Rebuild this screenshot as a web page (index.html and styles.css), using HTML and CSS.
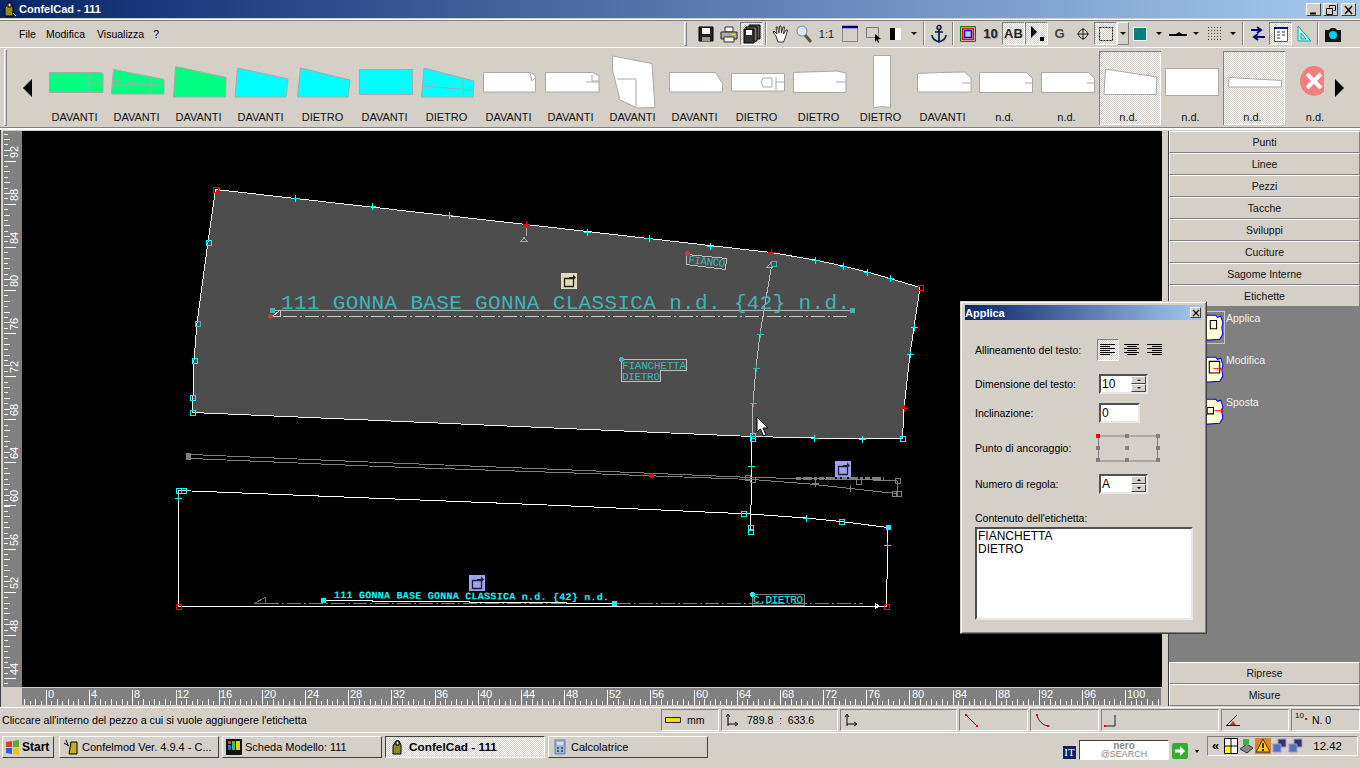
FILE: index.html
```html
<!DOCTYPE html>
<html lang="it">
<head>
<meta charset="utf-8">
<title>ConfelCad - 111</title>
<link rel="stylesheet" href="styles.css">
</head>
<body>
<div class="app">
  <header class="titlebar">
    <svg class="title-icon" width="16" height="16" viewBox="0 0 16 16"><path d="M3 15V7l3-5h3l2 4v9z" fill="#8a8a20" stroke="#000"/><path d="M6 2h3v4H6z" fill="#ddd" stroke="#000"/><path d="M11 12l3 3" stroke="#fff"/></svg>
    <span class="title-text">ConfelCad - 111</span>
    <div class="win-btns">
      <button class="win-btn"><svg width="12" height="10" viewBox="0 0 12 10"><path d="M2 8.500h6" stroke="#000" stroke-width="2"/></svg></button>
      <button class="win-btn"><svg width="12" height="10" viewBox="0 0 12 10"><path d="M4.500 2.500V.5h6v5h-2M1.500 3.500h6v6h-6z" fill="none" stroke="#000"/></svg></button>
      <button class="win-btn close"><svg width="12" height="10" viewBox="0 0 12 10"><path d="M2 1l7 8M9 1l-7 8" stroke="#000" stroke-width="1.500"/></svg></button>
    </div>
  </header>

  <div class="menubar">
    <nav class="menu"><span>File</span><span>Modifica</span><span>Visualizza</span><span>?</span></nav>
    <div class="toolbar">
      <i class="grip"></i>
      <button class="tb"><svg viewBox="0 0 20 20"><path d="M3 3h14v14H3z" fill="#222" stroke="#000"/><path d="M6 4h8v6H6z" fill="#fff"/><path d="M6 13h8v4H6z" fill="#999"/></svg></button>
      <button class="tb"><svg viewBox="0 0 20 20"><path d="M6 3h8v5H6z" fill="#fff" stroke="#333"/><path d="M2 8h16v7H2z" fill="#aaa" stroke="#222"/><path d="M5 13h10v5H5z" fill="#eee" stroke="#333"/><path d="M13 10h3v1h-3z" fill="#ff0"/></svg></button>
      <button class="tb on"><svg viewBox="0 0 20 20"><path d="M7 1h11v14H7z" fill="#555" stroke="#000"/><path d="M4 3h11v14H4z" fill="#777" stroke="#000"/><path d="M2 5h10v14H2z" fill="#333" stroke="#000"/><path d="M4 6h6v5H4z" fill="#fff"/></svg></button>
      <i class="sep"></i>
      <button class="tb"><svg viewBox="0 0 20 20"><path d="M5 12L2 8l1-1 3 3-1-7h1.500L8 9 8.500 2H10l.5 7 1.500-6h1.500l-1 7 2.500-4h1.500l-2 7-2 5H7z" fill="#fff" stroke="#222" stroke-width=".9"/></svg></button>
      <button class="tb"><svg viewBox="0 0 20 20"><circle cx="8" cy="7" r="5" fill="#dde8f0" stroke="#789"/><path d="M11 11l6 7" stroke="#555" stroke-width="3"/></svg></button>
      <button class="tb txt">1:1</button>
      <button class="tb"><svg viewBox="0 0 20 20"><path d="M2.500 3.500h15v14h-15z" fill="none" stroke="#888"/><path d="M2 3h16" stroke="#000080" stroke-width="2.500"/></svg></button>
      <button class="tb"><svg viewBox="0 0 20 20"><path d="M3.500 3.500h12v10h-12z" fill="none" stroke="#777"/><path d="M12 10l6 5-3 .5 1 3-1 .5-1-3-2 2z" fill="#000"/></svg></button>
      <button class="tb"><svg viewBox="0 0 20 20"><path d="M4 4h5v12H4z" fill="#000"/><path d="M9 4h6v12H9z" fill="#fff"/></svg></button>
      <button class="dd"><i></i></button>
      <i class="sep wide"></i>
      <button class="tb"><svg viewBox="0 0 20 20"><circle cx="10" cy="3.500" r="2" fill="none" stroke="#000" stroke-width="1.300"/><path d="M10 5v13M6 8h8M3 11c0 4 4 6 7 7 3-1 7-3 7-7" fill="none" stroke="#002050" stroke-width="1.700"/></svg></button>
      <i class="sep wide"></i>
      <button class="tb"><svg viewBox="0 0 20 20"><path d="M2.500 2.500h15v15h-15z" fill="none" stroke="#008000"/><path d="M4.500 4.500h11v11h-11z" fill="none" stroke="#f00" stroke-width="1.500"/><path d="M6.500 6.500h7v7h-7z" fill="#bcd" stroke="#00f" stroke-width="1.500"/></svg></button>
      <button class="tb txt big shadow">10</button>
      <button class="tb txt big on">AB</button>
      <button class="tb on"><svg viewBox="0 0 20 20"><path d="M4 2l6 6-6 6z" fill="#000"/><path d="M13 13h4v4h-4z" fill="#000"/></svg></button>
      <button class="tb txt big gray">G</button>
      <button class="tb"><svg viewBox="0 0 20 20"><circle cx="10" cy="10" r="4.500" fill="none" stroke="#222"/><path d="M10 4v12M4 10h12" stroke="#222"/></svg></button>
      <button class="tb on"><svg viewBox="0 0 20 20"><path d="M3.500 3.500h13v13h-13z" fill="none" stroke="#000" stroke-dasharray="2 1"/></svg></button>
      <button class="dd raised"><i></i></button>
      <button class="tb"><svg viewBox="0 0 20 20"><path d="M2.500 3.500h13v13h-13z" fill="#008080" stroke="#fff"/></svg></button>
      <button class="dd"><i></i></button>
      <button class="tb"><svg viewBox="0 0 20 20"><path d="M1 10h7l3-2 3 2h5v2H1z" fill="#000"/></svg></button>
      <button class="dd"><i></i></button>
      <button class="tb"><svg viewBox="0 0 20 20"><path d="M3 3.500h14M3 6.500h14M3 9.500h14M3 12.500h14M3 15.500h14" stroke="#444" stroke-dasharray="1 2"/></svg></button>
      <button class="dd"><i></i></button>
      <i class="sep"></i>
      <button class="tb"><svg viewBox="0 0 20 20"><path d="M3 6h9M9 3l4 3-4 3M17 13H7M10 10l-4 3 4 3" fill="none" stroke="#000080" stroke-width="2"/></svg></button>
      <button class="tb on"><svg viewBox="0 0 20 20"><path d="M3.500 3.500h13v14h-13z" fill="#fff" stroke="#555"/><path d="M3 3h14v2H3z" fill="#000080"/><path d="M6 8h3M11 8h3M6 11h3M11 11h3M6 14h3" stroke="#333"/></svg></button>
      <button class="tb"><svg viewBox="0 0 20 20"><path d="M4 2l13 15H4zM7 9l5 6H7z" fill="#bff" fill-rule="evenodd" stroke="#0aa"/></svg></button>
      <i class="sep"></i>
      <button class="tb"><svg viewBox="0 0 20 20"><path d="M2 6h4l2-2h4l2 2h4v12H2z" fill="#111"/><circle cx="10" cy="11" r="4" fill="#0cf"/></svg></button>
    </div>
  </div>

  <section class="strip">
    <i class="grip tall"></i>
    <svg class="nav-arrow" width="9" height="18" viewBox="0 0 9 18"><path d="M9 0v18L0 9z" fill="#000"/></svg>
    <div class="pieces">
      <figure class="piece"><svg viewBox="45 51 62 59"><path class="g" d="M49.500 72.500h51l2.500 1v19h-53.500z"/><path class="l" d="M89 73v19M89 83h14"/></svg><figcaption>DAVANTI</figcaption></figure>
      <figure class="piece"><svg viewBox="107 51 62 59"><path class="g" d="M113.500 69.500l50.500 10v14.500h-52.500z"/><path class="l" d="M151 77v17M112 85l50 0M112 80l40 5"/></svg><figcaption>DAVANTI</figcaption></figure>
      <figure class="piece"><svg viewBox="169 51 62 59"><path class="g" d="M175.500 66.500l50.500 11-.5 19.500h-52z"/></svg><figcaption>DAVANTI</figcaption></figure>
      <figure class="piece"><svg viewBox="231 51 62 59"><path class="c" d="M237.500 68l50.500 11-2 18h-51z"/></svg><figcaption>DAVANTI</figcaption></figure>
      <figure class="piece"><svg viewBox="293 51 62 59"><path class="c" d="M300.500 68l49.500 12-2 17h-50.500z"/></svg><figcaption>DIETRO</figcaption></figure>
      <figure class="piece"><svg viewBox="355 51 62 59"><path class="c" d="M359.500 69.500h53v25h-53z"/></svg><figcaption>DAVANTI</figcaption></figure>
      <figure class="piece"><svg viewBox="417 51 62 59"><path class="c" d="M424 68l50 13-1 16h-51.500z"/><path class="l" d="M422 86l51 4M463 78v19"/></svg><figcaption>DIETRO</figcaption></figure>
      <figure class="piece"><svg viewBox="479 51 62 59"><path class="w" d="M483.500 72.500h47l5 3v16.500h-52z"/><path class="l" d="M530 73l2 8 3-3"/></svg><figcaption>DAVANTI</figcaption></figure>
      <figure class="piece"><svg viewBox="541 51 62 59"><path class="w" d="M545.500 72.500h47l6.500 3v16.500h-53.500z"/><path class="l" d="M592 75v6h7M586 82h13"/></svg><figcaption>DAVANTI</figcaption></figure>
      <figure class="piece"><svg viewBox="603 51 62 59"><path class="w" d="M612.500 56l39.500 7.500 3 44-17.500 .5-17.500-8-7.500-30z"/><path class="l" d="M617 79h19v28"/></svg><figcaption>DAVANTI</figcaption></figure>
      <figure class="piece"><svg viewBox="665 51 62 59"><path class="w" d="M669.500 72.500h46l7 11v8.500h-53z"/></svg><figcaption>DAVANTI</figcaption></figure>
      <figure class="piece"><svg viewBox="727 51 62 59"><path class="w" d="M731.500 73.500h53v17.500h-53z"/><path class="l" d="M772 78h-9l-2 4 2 5h9zM776 77l0 13M785 82h-9"/></svg><figcaption>DIETRO</figcaption></figure>
      <figure class="piece"><svg viewBox="789 51 62 59"><path class="w" d="M793.500 72.500l43-1.500 9.500 2v19.500h-52.500z"/><path class="l" d="M836 82h10"/></svg><figcaption>DIETRO</figcaption></figure>
      <figure class="piece"><svg viewBox="851 51 62 59"><path class="w" d="M873.500 55.500h17v52l-8-1-9 1z"/></svg><figcaption>DIETRO</figcaption></figure>
      <figure class="piece"><svg viewBox="913 51 62 59"><path class="w" d="M917.500 73.500l23-1 24-.5 6.500 6v14h-53.500z"/><path class="l" d="M962 83h8"/></svg><figcaption>DAVANTI</figcaption></figure>
      <figure class="piece"><svg viewBox="975 51 62 59"><path class="w" d="M979.500 72.500h47l6 6v14h-53z"/><path class="l" d="M1025 83h7"/></svg><figcaption>n.d.</figcaption></figure>
      <figure class="piece"><svg viewBox="1037 51 62 59"><path class="w" d="M1041.500 72.500h47l6 6v14h-53z"/><path class="l" d="M1087 83h7"/></svg><figcaption>n.d.</figcaption></figure>
      <figure class="piece on"><svg viewBox="1099 51 62 59"><path class="w" d="M1105.500 69l51.500 8-1 17.500h-52z"/></svg><figcaption>n.d.</figcaption></figure>
      <figure class="piece"><svg viewBox="1161 51 62 59"><path class="w" d="M1165.500 68.500h53v27h-53z"/></svg><figcaption>n.d.</figcaption></figure>
      <figure class="piece on"><svg viewBox="1223 51 62 59"><path class="w" d="M1229 77.500l52.500 3v6.500h-53z"/></svg><figcaption>n.d.</figcaption></figure>
      <figure class="piece last"><svg viewBox="1285 51 50 59"><defs><clipPath id="redclip"><path d="M1285 51h39v59h-39z"/></clipPath></defs><g clip-path="url(#redclip)"><ellipse cx="1314" cy="81" rx="14" ry="15" fill="#f08080"/><path d="M1307 74l14 14M1321 74l-14 14" stroke="#fff" stroke-width="4"/></g></svg><figcaption>n.d.</figcaption></figure>
    </div>
    <svg class="nav-arrow" width="9" height="18" viewBox="0 0 9 18"><path d="M0 0v18L9 9z" fill="#000"/></svg>
  </section>

  <main class="workspace">
    <div class="drawing">
      <svg class="ruler-v" viewBox="3 131 19 556">
        <rect x="3" y="131" width="19" height="556" fill="#808080"/>
        <g shape-rendering="crispEdges" stroke="#fff">
          <path d="M6 117.500V687" stroke-width="4" stroke-dasharray="1 4.390"/>
          <path d="M7 117.500V687" stroke-width="6" stroke-dasharray="1 9.780"/>
          <path d="M10 117.500V687" stroke-width="12" stroke-dasharray="1 42.100"/>
        </g>
        <g class="rtext">
          <text transform="rotate(-90 18 158)" x="18" y="158">92</text>
          <text transform="rotate(-90 18 201)" x="18" y="201">88</text>
          <text transform="rotate(-90 18 244)" x="18" y="244">84</text>
          <text transform="rotate(-90 18 287)" x="18" y="287">80</text>
          <text transform="rotate(-90 18 330)" x="18" y="330">76</text>
          <text transform="rotate(-90 18 373)" x="18" y="373">72</text>
          <text transform="rotate(-90 18 416)" x="18" y="416">68</text>
          <text transform="rotate(-90 18 459)" x="18" y="459">64</text>
          <text transform="rotate(-90 18 502)" x="18" y="502">60</text>
          <text transform="rotate(-90 18 546)" x="18" y="546">56</text>
          <text transform="rotate(-90 18 589)" x="18" y="589">52</text>
          <text transform="rotate(-90 18 632)" x="18" y="632">48</text>
          <text transform="rotate(-90 18 675)" x="18" y="675">44</text>
        </g>
      </svg>
      <svg class="canvas" viewBox="22 131 1140 556">
        <defs>
          <rect id="s" x="-2.500" y="-2.500" width="5" height="5" fill="none"/>
          <path id="p" d="M-3.500 0h7M0-3.500v7"/>
          <g id="rot"><path d="M3.500 5.500h9v8h-9z" fill="none" stroke="#222" stroke-width="1.300"/><path d="M8 4h4V1.500l3 3-3 3V5H9v1H8z" fill="#222"/></g>
        </defs>
        <rect x="22" y="131" width="1140" height="556" fill="#000"/>
        <g class="crisp">
          <path d="M215.500 189.500L526 224.500 771 252.500 815 260 843 266 867 272 890 278.500 920 287.500 914 327 910 354.500 904 408.500 902.500 438.500 863 439 814 438 752 436.500 192.500 412.500 194 360.500 197 323 208 242z" fill="#4d4d4d" stroke="#f0f0f0"/>
          <path d="M772 263L760 334 756 368 753 403 752 436" fill="none" stroke="#b8b8b8"/>
          <path d="M752 437L751.500 497 750.500 514 750.500 530" fill="none" stroke="#fff"/>
          <path d="M272 310.500H852" stroke="#b8b8b8" fill="none"/>
          <path d="M283 316.500H850" stroke="#c8c8c8" stroke-dasharray="14 3 2 3" fill="none"/>
          <path d="M273 316l6-5v-.5h1v6z" fill="none" stroke="#ccc"/>
          <path d="M526 226v10M521 241.500h6l-3-4z" fill="none" stroke="#aaa"/>
          <path d="M767 267.500h5l-1-5z" fill="none" stroke="#aaa"/>
          <path d="M686.500 254.500L726.500 258.500 725.500 269.500 686.500 264.500z" fill="none" stroke="#c0c0c0"/>
          <path d="M621.500 359.500h65v11h-26v11h-39z" fill="none" stroke="#c0c0c0"/>

          <g stroke="#0ff">
            <use href="#p" x="295.500" y="198.500"/><use href="#p" x="372.500" y="206.500"/><use href="#p" x="449.500" y="215.500"/>
            <use href="#p" x="587.500" y="232.500"/><use href="#p" x="649.500" y="238.500"/><use href="#p" x="710.500" y="246.500"/>
            <use href="#p" x="815.500" y="260.500"/><use href="#p" x="843.500" y="266.500"/><use href="#p" x="867.500" y="272.500"/><use href="#p" x="890.500" y="278.500"/>
            <use href="#p" x="914.500" y="327.500"/><use href="#p" x="910.500" y="354.500"/><use href="#p" x="862.500" y="439.500"/><use href="#p" x="814.500" y="438.500"/>
            <use href="#s" x="208.500" y="242.500"/><use href="#s" x="194.500" y="360.500"/><use href="#s" x="192.500" y="397.500"/><use href="#s" x="192.500" y="412.500"/>
            <use href="#s" x="902.500" y="438.500"/><use href="#s" x="752.500" y="435.500"/><use href="#s" x="752.500" y="438.500"/>
          </g>
          <g stroke="#3fb5b5">
            <use href="#s" x="197.500" y="323.500"/><use href="#s" x="773.500" y="263.500"/>
            <use href="#p" x="760.500" y="334.500"/><use href="#p" x="756.500" y="368.500"/><use href="#p" x="753.500" y="403.500"/>
          </g>
          <g stroke="#f00">
            <use href="#p" x="526.500" y="224.500"/><use href="#p" x="771.500" y="252.500"/><use href="#p" x="904.500" y="408.500"/>
            <use href="#s" x="215.500" y="189.500"/><use href="#s" x="920.500" y="287.500"/>
          </g>
          <rect x="270" y="308" width="5" height="5" fill="#3fb5b5"/>
          <rect x="850" y="308" width="5" height="5" fill="#3fb5b5"/>
          <circle cx="270.500" cy="316.500" r="2.500" fill="#b84040"/>
          <circle cx="687.500" cy="253.500" r="2.500" fill="#b84040"/>
          <circle cx="621.500" cy="359.500" r="2.500" fill="#3fb5b5"/>

          <g fill="none" stroke="#808080">
            <path d="M191 454.500L380 462.500 560 469.500 752 477.500 897 480.500"/>
            <path d="M191 458.500L380 466.500 560 472.500 752 479.500 810 484 896 493.500"/>
            <path d="M897.500 481v12"/>
            <path d="M796 478.500h88" stroke-width="3" stroke-dasharray="5 2 9 2 3 2"/>
          </g>
          <rect x="185.500" y="452.500" width="5" height="7" fill="#808080"/>
          <g stroke="#808080">
            <use href="#s" x="747.500" y="477.500"/><use href="#s" x="752.500" y="479.500"/><use href="#s" x="858.500" y="481.500"/><use href="#s" x="897.500" y="480.500"/><use href="#s" x="894.500" y="493.500"/><use href="#s" x="898.500" y="493.500"/>
            <use href="#p" x="815.500" y="483.500"/><use href="#p" x="850.500" y="488.500"/>
          </g>
          <circle cx="651.500" cy="475.500" r="2.500" fill="#f00"/>

          <path d="M178.500 490.500L560 505.500 750 514 806 518 841 521.500 888 527.500 886.500 606.500H178.500z" fill="none" stroke="#fff"/>
          <path d="M254 603.500h11v-6z" fill="none" stroke="#707070"/>
          <path d="M265 603.500H863" stroke="#808080" stroke-dasharray="14 3 2 3" fill="none"/>
          <path d="M323 600.500H372v1H469v1H566v1H614" stroke="#fff" fill="none"/>
          <path d="M752.500 594.500h52v11h-52z" fill="none" stroke="#808080"/>
          <path d="M875 603v6l4-3z" fill="none" stroke="#fff"/>
          <g stroke="#0ff">
            <use href="#s" x="178.500" y="490.500"/><use href="#s" x="183.500" y="490.500"/><use href="#p" x="178.500" y="498.500"/>
            <use href="#s" x="743.500" y="513.500"/><use href="#s" x="750.500" y="527.500"/><use href="#s" x="750.500" y="531.500"/><use href="#p" x="751.500" y="466.500"/>
            <use href="#p" x="806.500" y="518.500"/><use href="#s" x="841.500" y="521.500"/><use href="#p" x="887.500" y="545.500"/>
          </g>
          <rect x="886" y="525" width="5" height="5" fill="#0ff"/>
          <rect x="321" y="598" width="5" height="5" fill="#0ff"/>
          <rect x="612" y="601" width="5" height="5" fill="#0ff"/>
          <circle cx="752.500" cy="594.500" r="2.500" fill="#0ff"/>
          <g stroke="#f00"><use href="#s" x="178.500" y="606.500"/><use href="#s" x="886.500" y="606.500"/></g>
        </g>

        <text class="mono big-label" x="281" y="309" textLength="569" lengthAdjust="spacing">111 GONNA BASE GONNA CLASSICA n.d. {42} n.d.</text>
        <text class="mono teal-small" x="688" y="263" textLength="37" transform="rotate(6 688 263)">FIANCO</text>
        <text class="mono teal-small" x="622" y="369" textLength="64">FIANCHETTA</text>
        <text class="mono teal-small" x="622" y="380" textLength="38">DIETRO</text>
        <text class="mono cyan-small" x="334" y="598" textLength="275" transform="rotate(.5 334 598)">111 GONNA BASE GONNA CLASSICA n.d. {42} n.d.</text>
        <text class="mono cyan-mid" x="753" y="603" textLength="50">C.DIETRO</text>

        <g><rect x="561" y="273" width="16" height="16" fill="#deddb8"/><use href="#rot" x="561" y="273"/></g>
        <g><rect x="469" y="575" width="16" height="16" fill="#a0a0f4"/><use href="#rot" x="469" y="575"/></g>
        <g><rect x="835" y="461" width="16" height="16" fill="#a0a0f4"/><use href="#rot" x="835" y="461"/></g>

        <path d="M757 417v15l3.500-3 3 7 2.500-1-3-7h5z" fill="#fff" stroke="#000"/>
      </svg>
      <i class="corner"></i>
      <svg class="ruler-h" viewBox="22 688 1139 17">
        <rect x="22" y="688" width="1139" height="17" fill="#808080"/>
        <g shape-rendering="crispEdges" stroke="#fff">
          <path d="M2.830 702.500H1161" stroke-width="4" stroke-dasharray="1 4.396"/>
          <path d="M2.830 701.500H1161" stroke-width="6" stroke-dasharray="1 9.792"/>
          <path d="M2.830 697H1161" stroke-width="15" stroke-dasharray="1 42.170"/>
        </g>
        <g class="rtext">
          <text x="48" y="698">0</text><text x="91" y="698">4</text><text x="134" y="698">8</text><text x="177" y="698">12</text><text x="220" y="698">16</text><text x="264" y="698">20</text><text x="307" y="698">24</text><text x="350" y="698">28</text><text x="393" y="698">32</text><text x="436" y="698">36</text><text x="480" y="698">40</text><text x="523" y="698">44</text><text x="566" y="698">48</text><text x="609" y="698">52</text><text x="652" y="698">56</text><text x="696" y="698">60</text><text x="739" y="698">64</text><text x="782" y="698">68</text><text x="825" y="698">72</text><text x="868" y="698">76</text><text x="912" y="698">80</text><text x="955" y="698">84</text><text x="998" y="698">88</text><text x="1041" y="698">92</text><text x="1084" y="698">96</text><text x="1127" y="698">100</text>
        </g>
      </svg>
    </div>

    <aside class="sidepanel">
      <button class="tab">Punti</button>
      <button class="tab">Linee</button>
      <button class="tab">Pezzi</button>
      <button class="tab">Tacche</button>
      <button class="tab">Sviluppi</button>
      <button class="tab">Cuciture</button>
      <button class="tab">Sagome Interne</button>
      <button class="tab">Etichette</button>
      <div class="tab-body">
        <div class="tool active">
          <svg width="43" height="33" viewBox="0 0 41 31.500"><path d="M22 4h10l2 2 3-1 2 6-1 5 1 6-3 5-14 1z" fill="#ffffd8" stroke="#00f"/><path d="M27 9h6v8h-6z" fill="none" stroke="#000"/></svg>
          <span>Applica</span>
        </div>
        <div class="tool">
          <svg width="43" height="33" viewBox="0 0 41 31.500"><path d="M22 4h10l2 2 3-1 2 6-1 5 1 6-3 5-14 1z" fill="#ffffd8" stroke="#00f"/><path d="M26 8h10v11H26z" fill="none" stroke="#000"/><path d="M30 15h7M35 13l2 2-2 2" stroke="#f00" fill="none"/></svg>
          <span>Modifica</span>
        </div>
        <div class="tool">
          <svg width="43" height="33" viewBox="0 0 41 31.500"><path d="M22 4h10l2 2 3-1 2 6-1 5 1 6-3 5-14 1z" fill="#ffffd8" stroke="#00f"/><path d="M24 12h6v6h-6z" fill="none" stroke="#000"/><path d="M31 15h8M37 13l2 2-2 2" stroke="#f00" fill="none"/></svg>
          <span>Sposta</span>
        </div>
      </div>
      <button class="tab">Riprese</button>
      <button class="tab">Misure</button>
    </aside>
  </main>

  <footer class="statusbar">
    <div class="status-msg">Cliccare all'interno del pezzo a cui si vuole aggiungere l'etichetta</div>
    <div class="cell c1"><svg width="16" height="8" viewBox="0 0 16 8"><path d="M.5 1.500h15v5H.500z" fill="#f0e020" stroke="#222"/></svg><span>mm</span></div>
    <div class="cell c2"><svg class="axes" width="14" height="14" viewBox="0 0 14 14"><path d="M3 13V2M1 4l2-3 2 3M3 11h9M10 9l3 2-3 2" fill="none" stroke="#000"/></svg><span>789.8&nbsp; :&nbsp; 633.6</span></div>
    <div class="cell c3"><svg class="axes" width="14" height="14" viewBox="0 0 14 14"><path d="M3 13V2M1 4l2-3 2 3M3 11h9M10 9l3 2-3 2" fill="none" stroke="#000"/></svg></div>
    <div class="cell c4"><svg width="14" height="14" viewBox="0 0 14 14"><path d="M2 2l11 11" stroke="#222"/><path d="M1 1h2v2H1zM12 12h2v2h-2z" fill="#f00"/></svg></div>
    <div class="cell c5"><svg width="14" height="14" viewBox="0 0 14 14"><path d="M2 2c1 5 5 10 11 11" fill="none" stroke="#222"/><path d="M1 1h2v2H1zM12 12h2v2h-2z" fill="#f00"/></svg></div>
    <div class="cell c6"><svg width="14" height="14" viewBox="0 0 14 14"><path d="M1 13h10V2" fill="none" stroke="#222"/><path d="M0 12h2v2H0z" fill="#f00"/></svg></div>
    <div class="cell c7"><svg width="16" height="14" viewBox="0 0 16 14"><path d="M1 12.500h14M2 12L12 2" stroke="#222"/><path d="M5 12l3-4 3 4z" fill="#d03030"/></svg></div>
    <div class="cell c8"><small>10</small><i class="reddot"></i><span>N. 0</span></div>
  </footer>

  <div class="taskbar">
    <button class="start"><svg width="15" height="15" viewBox="0 0 15 15"><path d="M1 2l6-1v6H1z" fill="#e04020"/><path d="M8 1l6-1v7H8z" fill="#50b030"/><path d="M1 8h6v6l-6-1z" fill="#3060d0"/><path d="M8 8h6v7l-6-1z" fill="#f0c020"/></svg>Start</button>
    <button class="task"><svg width="16" height="16" viewBox="0 0 16 16"><path d="M8 3h6v12H6z" fill="#c0b020" stroke="#000"/><path d="M1 4l5 3M3 1l2 5" stroke="#000"/></svg>Confelmod Ver. 4.9.4 - C...</button>
    <button class="task"><svg width="16" height="16" viewBox="0 0 16 16"><path d="M0 0h16v16H0z" fill="#111"/><path d="M2 2h3v3H2z" fill="#e04040"/><path d="M6 2h3v9H6z" fill="#40c040"/><path d="M10 2h4v9h-4z" fill="#e0d020"/><path d="M2 6h3v5H2z" fill="#4060e0"/></svg>Scheda Modello: 111</button>
    <button class="task current"><svg width="16" height="16" viewBox="0 0 16 16"><path d="M3 15V7l3-5h3l2 4v9z" fill="#8a8a20" stroke="#000"/><path d="M6 2h3v4H6z" fill="#ddd" stroke="#000"/></svg>ConfelCad - 111</button>
    <button class="task"><svg width="16" height="16" viewBox="0 0 16 16"><path d="M3 1h10v14H3z" fill="#a0b8e0" stroke="#6080a0"/><path d="M5 3h6v3H5z" fill="#dde"/><path d="M5 8h2v2H5zM9 8h2v2H9zM5 11h2v2H5zM9 11h2v2H9z" fill="#557"/></svg>Calcolatrice</button>
    <div class="task-right">
      <span class="lang">IT</span>
      <div class="nero"><b>nero</b><span>@SEARCH</span></div>
      <svg class="go" width="16" height="16" viewBox="0 0 16 16"><rect width="16" height="16" rx="2" fill="#30b030"/><path d="M3 6.500h5V3l5 5-5 5V9.500H3z" fill="#fff"/></svg>
      <i class="tiny-arrow"></i>
      <div class="tray">
        <b class="chev">«</b>
        <svg width="14" height="16" viewBox="0 0 14 16"><path d="M.5.500h13v15H.5z" fill="#fff" stroke="#000"/><path d="M1 8h6v7H1z" fill="#ff0"/><path d="M7 0v16M0 8h14" stroke="#000"/></svg>
        <svg width="15" height="16" viewBox="0 0 15 16"><path d="M1 11l7-5 6 4-6 5z" fill="#888" stroke="#333"/><path d="M4 1h6v6H4z" fill="#40b040"/></svg>
        <svg width="16" height="16" viewBox="0 0 16 16"><path d="M0 0h16v16H0z" fill="#e08030"/><path d="M8 1l7 13H1z" fill="#fc0" stroke="#333"/><path d="M8 5v5M8 11v2" stroke="#000" stroke-width="1.500"/></svg>
        <svg width="15" height="16" viewBox="0 0 15 16"><path d="M6 1h8v8H6z" fill="#336" stroke="#99c"/><path d="M1 6h8v8H1z" fill="#5070c0" stroke="#99c"/></svg>
        <svg width="15" height="16" viewBox="0 0 15 16"><path d="M6 1h8v8H6z" fill="#336" stroke="#99c"/><path d="M1 6h8v8H1z" fill="#5070c0" stroke="#99c"/></svg>
        <span class="clock">12.42</span>
      </div>
    </div>
  </div>

  <div class="dialog">
    <div class="dlg-title"><span>Applica</span><button class="dlg-close"><svg width="8" height="8" viewBox="0 0 8 8"><path d="M1 1l6 6M7 1L1 7" stroke="#000" stroke-width="1.200"/></svg></button></div>
    <div class="dlg-row r1">
      <label>Allineamento del testo:</label>
      <div class="aligns">
        <button class="al on"><svg width="16" height="12" viewBox="0 0 16 12"><path d="M0 .5h15M0 2.500h10M0 4.500h15M0 6.500h10M0 8.500h15M0 10.500h10" stroke="#000"/></svg></button>
        <button class="al"><svg width="16" height="12" viewBox="0 0 16 12"><path d="M0 .5h15M3 2.500h10M0 4.500h15M3 6.500h10M0 8.500h15M3 10.500h10" stroke="#000"/></svg></button>
        <button class="al"><svg width="16" height="12" viewBox="0 0 16 12"><path d="M0 .5h15M5 2.500h10M0 4.500h15M5 6.500h10M0 8.500h15M5 10.500h10" stroke="#000"/></svg></button>
      </div>
    </div>
    <div class="dlg-row r2">
      <label>Dimensione del testo:</label>
      <div class="field spin"><span>10</span><div class="spinner"><i class="up"></i><i class="down"></i></div></div>
    </div>
    <div class="dlg-row r3">
      <label>Inclinazione:</label>
      <div class="field short"><span>0</span></div>
    </div>
    <div class="dlg-row r4">
      <label>Punto di ancoraggio:</label>
      <svg class="anchor" width="64" height="28" viewBox="0 0 64 28">
        <path d="M2.500 2.500h59v25h-59z" fill="none" stroke="#808080" transform="translate(0 -.5)"/>
        <g fill="#808080"><path d="M29 0h4v4h-4zM60 0h4v4h-4zM0 12h4v4H0zM29 12h4v4h-4zM60 12h4v4h-4zM0 24h4v4H0zM29 24h4v4h-4zM60 24h4v4h-4z"/></g>
        <path d="M0 0h4v4H0z" fill="#f00"/>
      </svg>
    </div>
    <div class="dlg-row r5">
      <label>Numero di regola:</label>
      <div class="field spin"><span>A</span><div class="spinner"><i class="up"></i><i class="down"></i></div></div>
    </div>
    <label class="content-label">Contenuto dell'etichetta:</label>
    <div class="textarea">FIANCHETTA<br>DIETRO</div>
  </div>
</div>
</body>
</html>
```

FILE: styles.css
```css
* { box-sizing: border-box; }
html, body { margin: 0; padding: 0; height: 100%; overflow: hidden; }
body { font: 10.500px/14px "Liberation Sans", Arial, sans-serif; color: #000; background: #d4d0c8; }
button { font: inherit; color: inherit; border: 0; background: none; padding: 0; margin: 0; }
figure { margin: 0; }
i { display: block; font-style: normal; }

.app { position: relative; width: 1360px; height: 768px; display: flex; flex-direction: column; background: #d4d0c8; overflow: hidden; }

.titlebar { height: 18px; margin-bottom: 1px; flex: none; display: flex; align-items: center; padding-left: 2px; background: linear-gradient(90deg, #0a246a, #a6caf0); color: #fff; }
.title-icon { margin-right: 1px; }
.title-text { font-weight: bold; font-size: 11px; }
.win-btns { margin-left: auto; display: flex; margin-right: 4px; margin-top: 1px; }
.win-btn { width: 15px; height: 13px; margin-left: 2px; background: #d4d0c8; border: 1px solid; border-color: #fff #404040 #404040 #fff; display: flex; align-items: center; justify-content: center; }
.win-btn.close { margin-left: 3px; }

.menubar { height: 29px; flex: none; display: flex; align-items: center; border-top: 1px solid #fff; border-bottom: 1px solid #fff; box-shadow: 0 1px 0 #808080 inset; position: relative; }
.menu { display: flex; padding-left: 19px; }
.menu span { margin-right: 10px; }
.menu span:nth-child(2) { margin-right: 12px; }
.menu span:nth-child(3) { margin-right: 9px; }
.toolbar { position: absolute; left: 684px; top: 0; height: 27px; display: flex; align-items: center; }
.grip { width: 3px; height: 24px; border: 1px solid; border-color: #fff #808080 #808080 #fff; margin-right: 7px; flex: none; }
.grip.tall { height: 77px; margin: 0 16px 0 4px; }
.tb { width: 23px; height: 23px; flex: none; display: flex; align-items: center; justify-content: center; }
.tb svg { width: 20px; height: 20px; }
.tb.on { background: repeating-conic-gradient(#fff 0 25%, #d4d0c8 0 50%) 0 0 / 2px 2px; border: 1px solid; border-color: #808080 #fff #fff #808080; }
.tb.txt { font-size: 11px; color: #222; }
.tb.big { font-size: 13px; font-weight: bold; }
.tb.gray { color: #444; }
.tb.shadow { text-shadow: 1px 1px 0 #999; }
.dd { width: 14px; height: 23px; flex: none; display: flex; align-items: center; justify-content: center; }
.dd i { width: 0; height: 0; border: 3px solid transparent; border-top: 3px solid #000; border-bottom: 0; }
.dd.raised { width: 12px; border: 1px solid; border-color: #fff #808080 #808080 #fff; }
.sep { width: 2px; height: 23px; flex: none; margin: 0 2px; border-left: 1px solid #808080; border-right: 1px solid #fff; }

.strip { height: 80px; flex: none; display: flex; align-items: center; border-bottom: 1px solid #808080; margin-bottom: 2px; box-shadow: 0 2px 0 #fff; }
.nav-arrow { flex: none; }
.pieces { display: flex; margin-left: 13px; flex: none; }
.piece { width: 62px; height: 74px; flex: none; display: flex; flex-direction: column; }
.piece svg { width: 62px; height: 59px; flex: none; }
.piece figcaption { height: 14px; text-align: center; padding-right: 3px; font-size: 11px; color: #111; }
.piece.on { background: repeating-conic-gradient(#fff 0 25%, #d4d0c8 0 50%) 0 0 / 2px 2px; box-shadow: inset 1px 1px 0 #808080, inset -1px -1px 0 #fff; }
.piece.last { width: 50px; }
.piece.last svg { width: 50px; }
.piece.last figcaption { padding: 0 0 0 10px; }
.g, .c, .w { stroke: #a8a8a8; stroke-width: 1; }
.g { fill: #00ff80; }
.c { fill: #00ffff; }
.w { fill: #fff; }
.l { fill: none; stroke: #a8a8a8; }

.workspace { height: 577px; flex: none; display: flex; }
.drawing { width: 1166px; flex: none; padding: 1px 0 0 3px; display: grid; grid-template-columns: 19px 1140px; grid-template-rows: 556px 17px; row-gap: 1px; border-left: 1px solid #404040; }
.ruler-v { width: 19px; height: 556px; display: block; margin-left: -1px; }
.canvas { width: 1140px; height: 556px; display: block; margin-left: -1px; }
.corner { background: none; }
.ruler-h { width: 1139px; height: 17px; display: block; margin-left: -1px; }
.rtext text { font: 11px "Liberation Sans", Arial, sans-serif; fill: #fff; }
.crisp { shape-rendering: crispEdges; }
.mono { font-family: "Liberation Mono", "Courier New", monospace; }
.big-label { font-size: 21px; fill: #3fb5b5; }
.teal-small { font-size: 11px; fill: #3fb5b5; }
.cyan-small { font-size: 10px; fill: #00ffff; font-weight: bold; }
.cyan-mid { font-size: 11px; fill: #00ffff; }

.sidepanel { flex: 1; margin: 1px 0 1px 2px; border-left: 1px solid #404040; display: flex; flex-direction: column; }
.tab { height: 22px; flex: none; background: #d4d0c8; border: 1px solid; border-color: #fff #808080 #808080 #fff; text-align: center; font-size: 10.500px; color: #111; }
.tab-body { flex: 1; background: #808080; padding: 4px 0 0 13px; }
.tool { display: flex; height: 33px; margin-bottom: 9px; color: #f0f0f0; }
.tool span { margin-left: 1px; }
.tool svg { flex: none; }
.tool.active svg { box-shadow: inset -1px -1px 0 #c8c8c8, inset 0 1px 0 #c8c8c8; }

.statusbar { height: 26px; flex: none; display: flex; align-items: center; border-top: 1px solid #fff; border-bottom: 1px solid #fff; }
.status-msg { width: 661px; flex: none; padding-left: 2px; font-size: 10.700px; }
.cell { height: 22px; flex: none; display: flex; align-items: center; gap: 6px; padding-left: 3px; margin-right: 2px; border: 1px solid; border-color: #808080 #fff #fff #808080; }
.c1 { width: 58px; } .c2 { width: 117px; gap: 8px; } .c3 { width: 117px; } .c4 { width: 69px; padding-left: 4px; } .c5 { width: 69px; padding-left: 4px; } .c6 { width: 118px; padding-left: 2px; } .c7 { width: 68px; padding-left: 3px; } .c8 { width: 69px; gap: 1px; margin-right: 0; }
.c8 small { font-size: 8px; margin-top: -8px; }
.reddot { width: 2px; height: 2px; background: #f00; margin: -3px 4px 0 0; }

.taskbar { height: 35px; flex: none; display: flex; align-items: flex-start; padding: 3px 0 0 2px; }
.start { width: 52px; height: 22px; margin-right: 5px; display: flex; align-items: center; gap: 2px; padding-left: 2px; font-weight: bold; font-size: 12px; border: 1px solid; border-color: #fff #404040 #404040 #fff; }
.task { width: 160px; height: 22px; margin-right: 3px; display: flex; align-items: center; gap: 3px; padding-left: 3px; border: 1px solid; border-color: #fff #404040 #404040 #fff; font-size: 11px; white-space: nowrap; overflow: hidden; }
.task.current { font-weight: bold; font-size: 11.800px; background: repeating-conic-gradient(#fff 0 25%, #d4d0c8 0 50%) 0 0 / 2px 2px; border-color: #404040 #fff #fff #404040; padding-left: 4px; }
.task-right { position: absolute; left: 1063px; top: 736px; width: 297px; height: 24px; display: flex; align-items: flex-start; }
.lang { width: 13px; height: 13px; margin-top: 10px; background: #0a246a; color: #fff; font: 11px/13px "Liberation Serif", serif; text-align: center; flex: none; }
.nero { width: 90px; height: 20px; margin: 4px 3px 0 3px; background: #fff; border: 1px solid; border-color: #404040 #fff #fff #404040; display: flex; flex-direction: column; align-items: center; color: #888; line-height: 9px; flex: none; }
.nero b { font-size: 10px; }
.nero span { font-size: 9px; }
.go { margin-top: 7px; flex: none; }
.tiny-arrow { width: 0; height: 0; margin: 14px 0 0 7px; border: 2.500px solid transparent; border-top: 3px solid #000; border-bottom: 0; flex: none; }
.tray { width: 151px; height: 20px; margin-left: 8px; display: flex; align-items: center; gap: 1px; padding-left: 4px; border: 1px solid; border-color: #808080 #fff #fff #808080; flex: none; }
.chev { font-size: 13px; margin-right: 4px; }
.clock { margin-left: 9px; font-size: 11.500px; }

.dialog { position: absolute; left: 960px; top: 301px; width: 247px; height: 333px; background: #d4d0c8; padding: 3px 4px 0; border: 1px solid; border-color: #d4d0c8 #404040 #404040 #d4d0c8; box-shadow: inset 1px 1px 0 #fff, inset -1px -1px 0 #808080; }
.dlg-title { height: 15px; margin-bottom: 19px; background: linear-gradient(90deg, #0a246a, #a6caf0); color: #fff; font-weight: bold; font-size: 11px; display: flex; align-items: center; justify-content: space-between; padding: 0; }
.dlg-close { width: 11px; height: 11px; margin-right: 1px; background: #d4d0c8; border: 1px solid; border-color: #fff #404040 #404040 #fff; display: flex; align-items: center; justify-content: center; }
.dlg-row { display: flex; align-items: center; padding-left: 10px; }
.dlg-row label { width: 124px; flex: none; font-size: 10.500px; }
.r1 { height: 22px; margin-bottom: 13px; }
.r2 { height: 20px; margin-bottom: 9px; }
.r3 { height: 20px; margin-bottom: 11px; }
.r4 { height: 28px; margin-bottom: 12px; }
.r5 { height: 20px; margin-bottom: 17px; }
.r4 label { width: 123px; }
.aligns { display: flex; margin-left: -2px; gap: 3px; }
.al { width: 22px; height: 22px; display: flex; align-items: center; justify-content: center; }
.al + .al { width: 20px; }
.al.on { background: repeating-conic-gradient(#fff 0 25%, #d4d0c8 0 50%) 0 0 / 2px 2px; border: 1px solid; border-color: #808080 #fff #fff #808080; }
.field { height: 20px; background: #fff; border: 2px solid; border-color: #505050 #e8e8e8 #e8e8e8 #505050; display: flex; align-items: center; padding-left: 1px; font-size: 12px; position: relative; }
.spin { width: 49px; }
.short { width: 41px; }
.spinner { position: absolute; right: 0; top: 0; bottom: 0; width: 15px; display: flex; flex-direction: column; background: #d4d0c8; }
.spinner i { flex: 1; display: flex; align-items: center; justify-content: center; border: 1px solid; border-color: #fff #404040 #404040 #fff; }
.spinner i::after { content: ""; border: 2px solid transparent; }
.spinner .up::after { border-bottom: 2px solid #000; border-top: 0; }
.spinner .down::after { border-top: 2px solid #000; border-bottom: 0; }
.anchor { margin-left: -2px; }
.content-label { display: block; padding-left: 10px; height: 14px; margin-bottom: 2px; }
.textarea { margin-left: 10px; width: 218px; height: 93px; background: #fff; border: 2px solid; border-color: #505050 #e8e8e8 #e8e8e8 #505050; padding: 1px 1px; font-size: 12px; line-height: 13px; }
```
